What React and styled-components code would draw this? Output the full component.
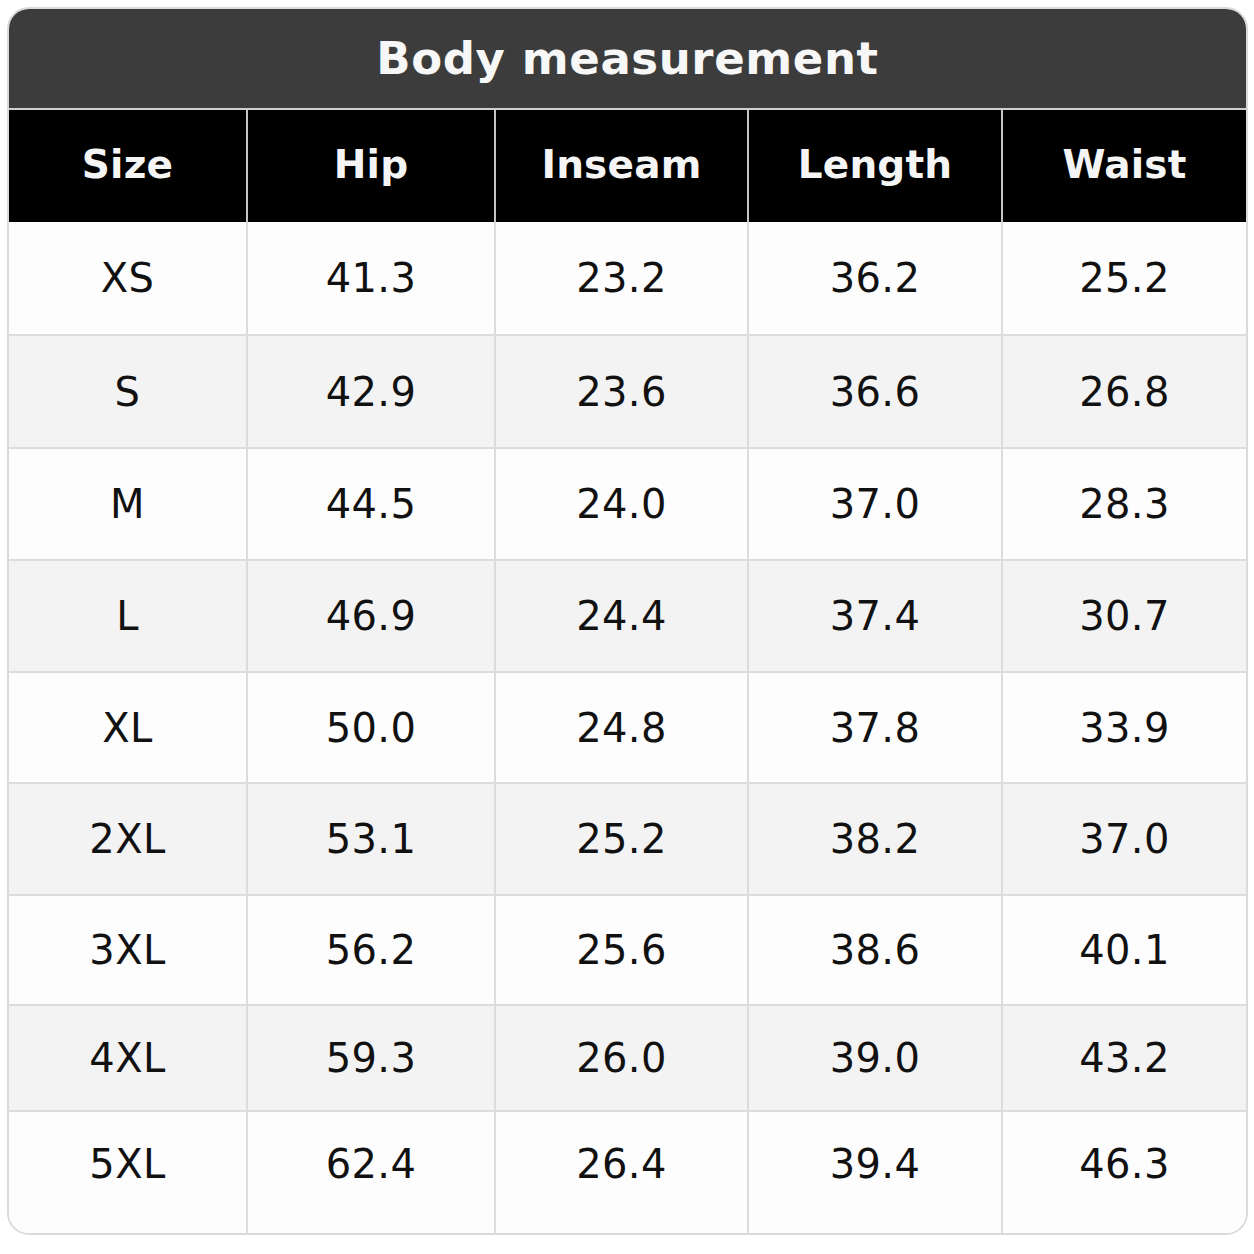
import React from "react"
import styled, { createGlobalStyle } from "styled-components"

const GlobalStyle = createGlobalStyle`
  * { box-sizing: border-box; }
  body {
    margin: 0;
    background: #ffffff;
    font-family: "DejaVu Sans", "Liberation Sans", sans-serif;
  }
`

const columns = ["Size", "Hip", "Inseam", "Length", "Waist"]

const rows = [
  { h: 112, cells: ["XS", "41.3", "23.2", "36.2", "25.2"] },
  { h: 113, cells: ["S", "42.9", "23.6", "36.6", "26.8"] },
  { h: 112, cells: ["M", "44.5", "24.0", "37.0", "28.3"] },
  { h: 112, cells: ["L", "46.9", "24.4", "37.4", "30.7"] },
  { h: 111, cells: ["XL", "50.0", "24.8", "37.8", "33.9"] },
  { h: 112, cells: ["2XL", "53.1", "25.2", "38.2", "37.0"] },
  { h: 110, cells: ["3XL", "56.2", "25.6", "38.6", "40.1"] },
  { h: 106, cells: ["4XL", "59.3", "26.0", "39.0", "43.2"] },
  { h: 123, cells: ["5XL", "62.4", "26.4", "39.4", "46.3"] },
]

function App() {
  return (
    <>
      <GlobalStyle />
      <Card>
        <Title>Body measurement</Title>
        <HeadRow>
          {columns.map((c, i) => (
            <HeadCell key={c} first={i === 0}>
              {c}
            </HeadCell>
          ))}
        </HeadRow>
        {rows.map((r, ri) => (
          <Row key={r.cells[0]} $h={r.h} $striped={ri % 2 === 1}>
            {r.cells.map((v, i) => (
              <Cell key={i} first={i === 0}>
                {v}
              </Cell>
            ))}
          </Row>
        ))}
      </Card>
    </>
  )
}

export default App

const Card = styled.div`
  margin: 7px 0 0 7px;
  width: 1241px;
  border: 2px solid #dadada;
  border-radius: 22px;
  overflow: hidden;
  background: #fdfdfd;
`

const Title = styled.div`
  height: 99px;
  background: #3c3c3c;
  color: #f7f7f7;
  display: flex;
  align-items: center;
  justify-content: center;
  font-size: 45px;
  font-weight: 700;
  letter-spacing: 0.6px;
`

const grid = `
  display: grid;
  grid-template-columns: 237px 248px 253px 254px 1fr;
`

const HeadRow = styled.div`
  ${grid}
  height: 114px;
  background: #000;
  border-top: 2px solid #cfcfcf;
`

const HeadCell = styled.div`
  display: flex;
  align-items: center;
  justify-content: center;
  color: #f5f5f5;
  font-size: 39px;
  font-weight: 700;
  letter-spacing: 0.2px;
  padding-bottom: 4px;
  border-left: ${(p) => (p.first ? "none" : "2px solid #c4c4c4")};
`

const Row = styled.div`
  ${grid}
  height: ${(p) => p.$h}px;
  background: ${(p) => (p.$striped ? "#f3f3f3" : "#fdfdfd")};
  border-top: 2px solid #dcdcdc;
  &:nth-of-type(3) {
    border-top: none;
  }
  &:last-child > * {
    padding-bottom: 18px;
  }
`

const Cell = styled.div`
  display: flex;
  align-items: center;
  justify-content: center;
  color: #111;
  font-size: 40px;
  letter-spacing: 0.4px;
  border-left: ${(p) => (p.first ? "none" : "2px solid #dcdcdc")};
`
